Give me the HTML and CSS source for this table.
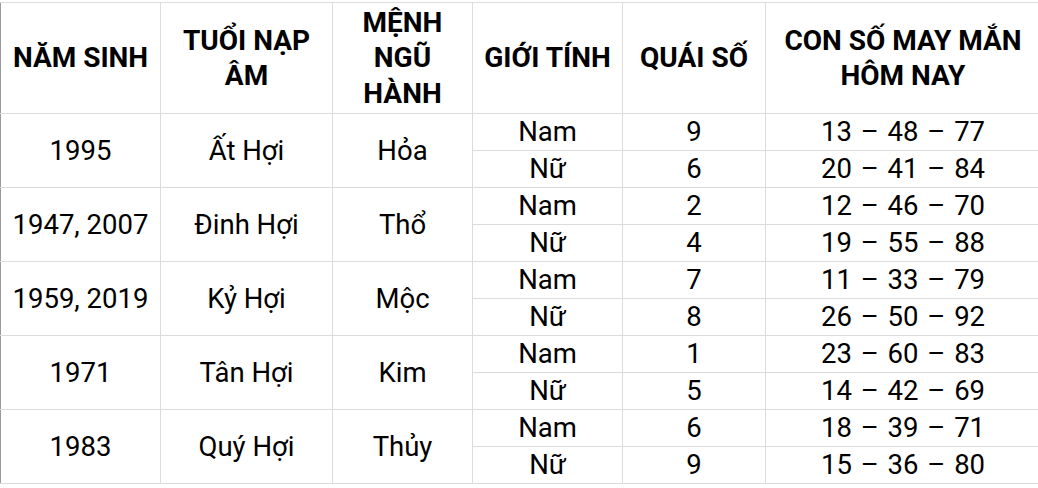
FILE: index.html
```html
<!DOCTYPE html>
<html lang="vi">
<head>
<meta charset="utf-8">
<link rel="stylesheet" href="styles.css">
</head>
<body>
<table class="tbl">
  <colgroup>
    <col class="c1"><col class="c2"><col class="c3"><col class="c4"><col class="c5"><col class="c6">
  </colgroup>
  <thead>
    <tr class="head">
      <th>NĂM SINH</th>
      <th>TUỔI NẠP<br>ÂM</th>
      <th>MỆNH<br>NGŨ<br>HÀNH</th>
      <th>GIỚI TÍNH</th>
      <th>QUÁI SỐ</th>
      <th>CON SỐ MAY MẮN<br>HÔM NAY</th>
    </tr>
  </thead>
  <tbody>
    <tr><td rowspan="2">1995</td><td rowspan="2">Ất Hợi</td><td rowspan="2">Hỏa</td><td>Nam</td><td>9</td><td class="nums">13 – 48 – 77</td></tr>
    <tr><td>Nữ</td><td>6</td><td class="nums">20 – 41 – 84</td></tr>
    <tr><td rowspan="2">1947, 2007</td><td rowspan="2">Đinh Hợi</td><td rowspan="2">Thổ</td><td>Nam</td><td>2</td><td class="nums">12 – 46 – 70</td></tr>
    <tr><td>Nữ</td><td>4</td><td class="nums">19 – 55 – 88</td></tr>
    <tr><td rowspan="2">1959, 2019</td><td rowspan="2">Kỷ Hợi</td><td rowspan="2">Mộc</td><td>Nam</td><td>7</td><td class="nums">11 – 33 – 79</td></tr>
    <tr><td>Nữ</td><td>8</td><td class="nums">26 – 50 – 92</td></tr>
    <tr><td rowspan="2">1971</td><td rowspan="2">Tân Hợi</td><td rowspan="2">Kim</td><td>Nam</td><td>1</td><td class="nums">23 – 60 – 83</td></tr>
    <tr><td>Nữ</td><td>5</td><td class="nums">14 – 42 – 69</td></tr>
    <tr><td rowspan="2">1983</td><td rowspan="2">Quý Hợi</td><td rowspan="2">Thủy</td><td>Nam</td><td>6</td><td class="nums">18 – 39 – 71</td></tr>
    <tr><td>Nữ</td><td>9</td><td class="nums">15 – 36 – 80</td></tr>
  </tbody>
</table>
</body>
</html>
```

FILE: styles.css
```css
html, body {
  margin: 0;
  padding: 0;
  background: #fff;
  overflow: hidden;
}
body {
  width: 1038px;
  height: 488px;
  font-family: Roboto, "Liberation Sans", sans-serif;
  color: #000;
}
.tbl {
  margin-top: 2px;
  border-collapse: collapse;
  table-layout: fixed;
  width: 1040px;
}
.c1 { width: 160px; }
.c2 { width: 172px; }
.c3 { width: 140px; }
.c4 { width: 150px; }
.c5 { width: 143px; }
.c6 { width: 275px; }
.tbl th, .tbl td {
  border: 1px solid #dcdcdc;
  padding: 0;
  text-align: center;
  vertical-align: middle;
  white-space: nowrap;
}
.tbl th:first-child, .tbl td[rowspan]:first-child {
  border-left-color: #9a9a9a;
}
.tbl th {
  font-weight: 700;
  font-size: 28px;
  line-height: 35.5px;
  height: 110px;
}
.tbl td {
  font-size: 27.5px;
  line-height: 30px;
  height: 36px;
}
.tbl td.nums {
  word-spacing: 2px;
}
```
